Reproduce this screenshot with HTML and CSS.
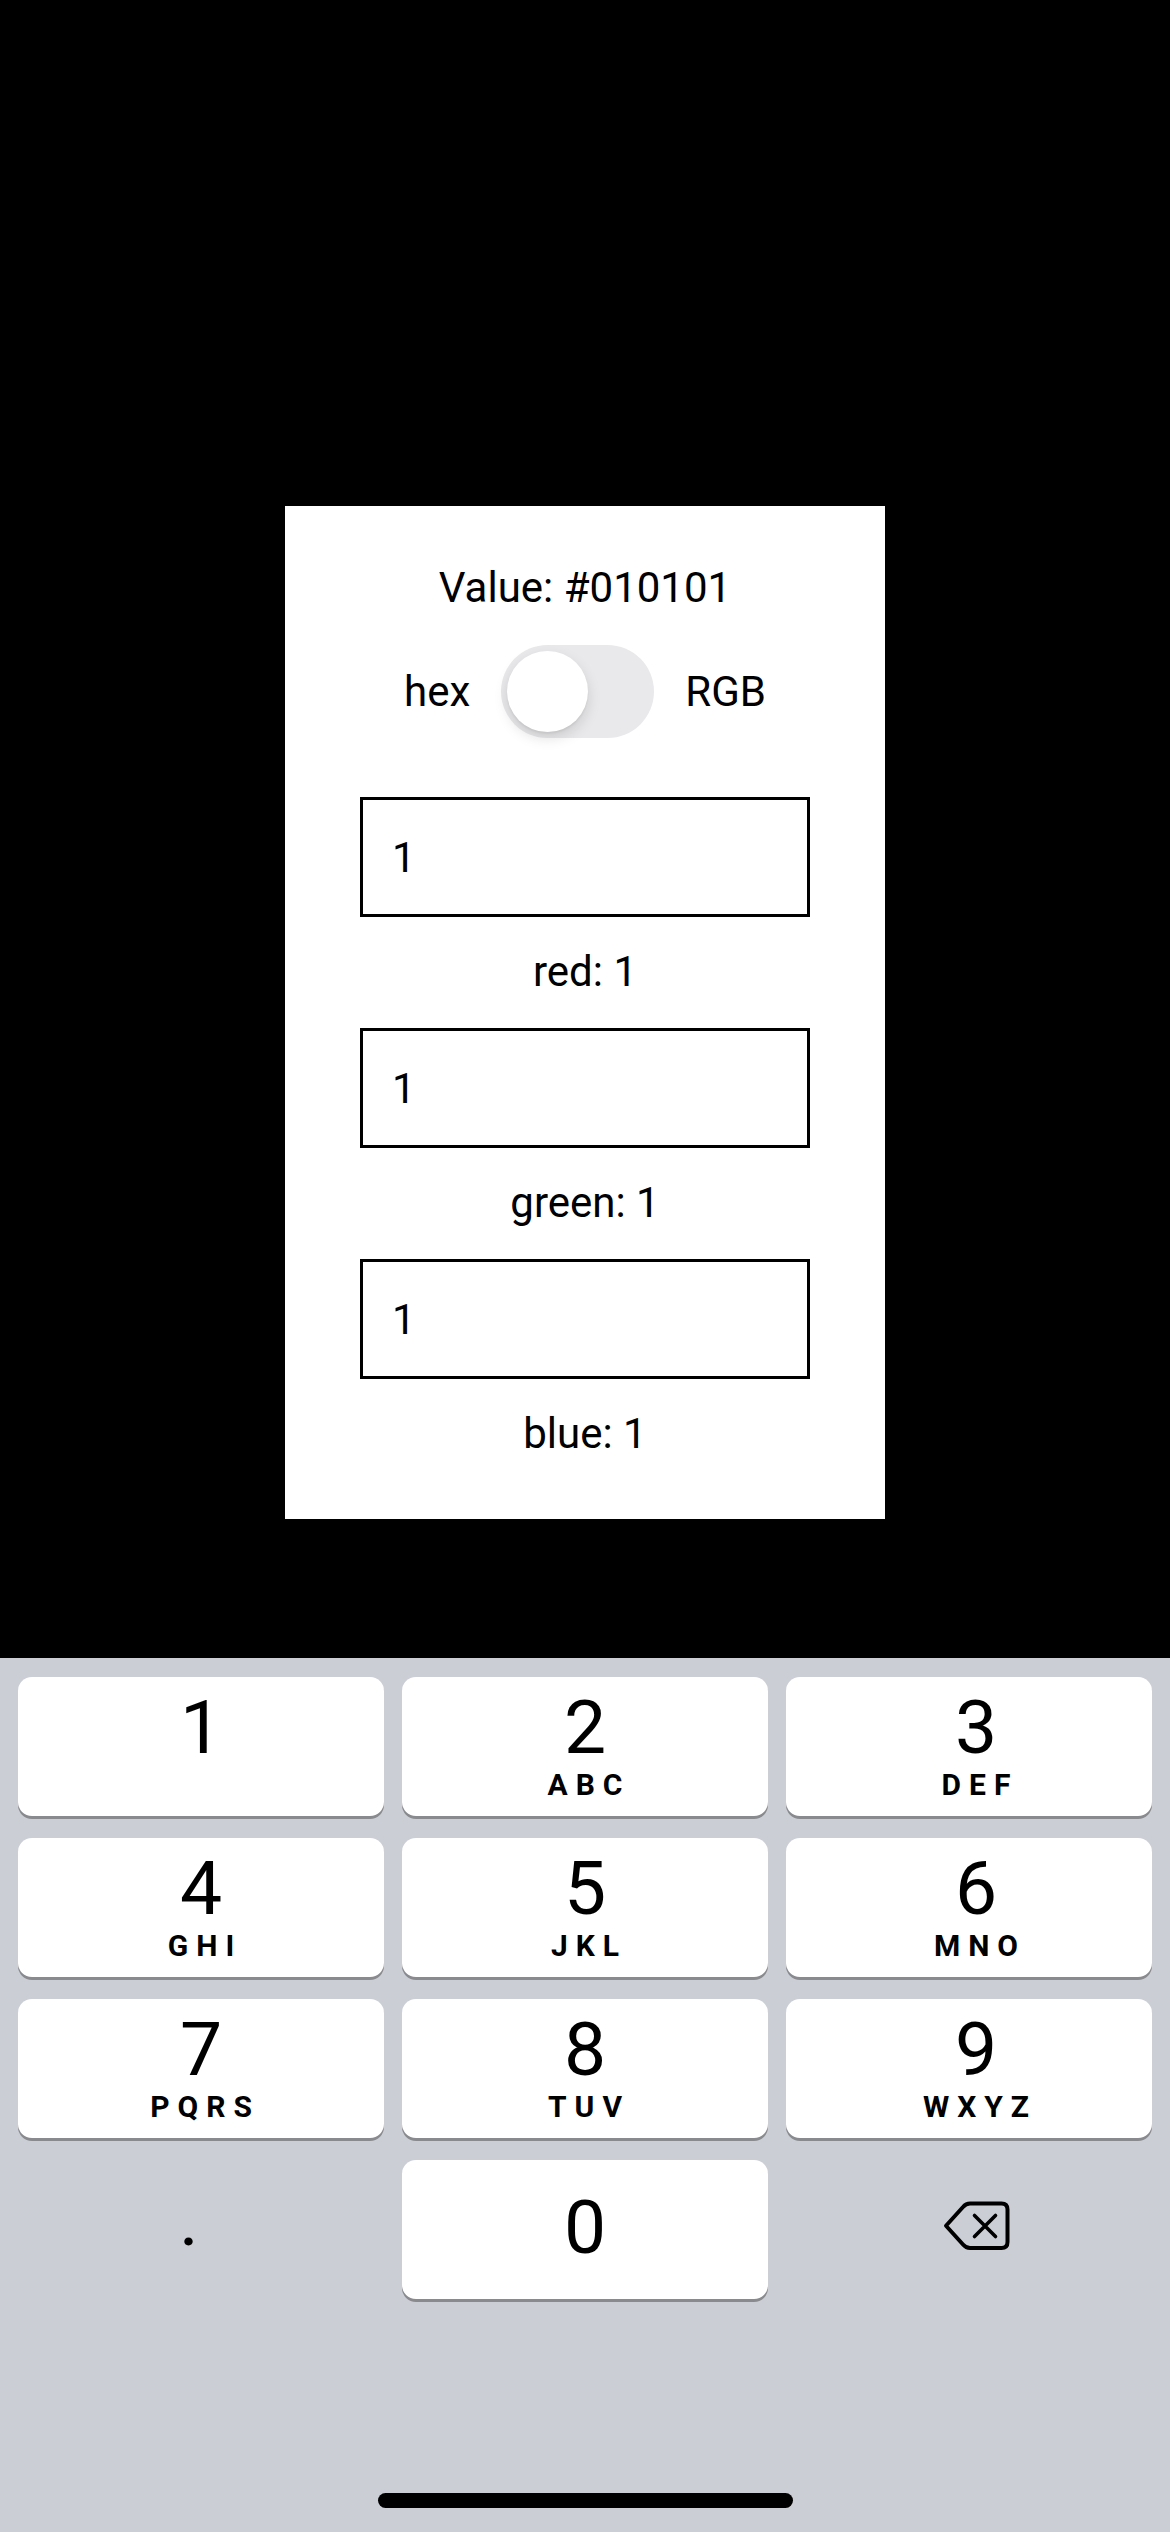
FILE: index.html
```html
<!DOCTYPE html>
<html lang="en">
<head>
<meta charset="utf-8">
<title>Color value</title>
<link rel="stylesheet" href="styles.css">
</head>
<body>
<div class="screen">
  <main class="stage">
    <section class="card">
      <p class="value">Value: #010101</p>
      <div class="switch-row">
        <span class="switch-label">hex</span>
        <span class="switch"><span class="knob"></span></span>
        <span class="switch-label">RGB</span>
      </div>
      <input class="field" type="text" value="1">
      <p class="channel">red: 1</p>
      <input class="field" type="text" value="1">
      <p class="channel">green: 1</p>
      <input class="field" type="text" value="1">
      <p class="channel">blue: 1</p>
    </section>
  </main>
  <section class="keyboard">
    <div class="keys">
      <div class="key"><span class="digit">1</span></div>
      <div class="key"><span class="digit">2</span><span class="letters">ABC</span></div>
      <div class="key"><span class="digit">3</span><span class="letters">DEF</span></div>
      <div class="key"><span class="digit">4</span><span class="letters">GHI</span></div>
      <div class="key"><span class="digit">5</span><span class="letters">JKL</span></div>
      <div class="key"><span class="digit">6</span><span class="letters">MNO</span></div>
      <div class="key"><span class="digit">7</span><span class="letters">PQRS</span></div>
      <div class="key"><span class="digit">8</span><span class="letters">TUV</span></div>
      <div class="key"><span class="digit">9</span><span class="letters">WXYZ</span></div>
      <div class="blank dot-key"><span class="digit">.</span></div>
      <div class="key zero"><span class="digit">0</span></div>
      <div class="blank back-key">
        <svg class="backspace" width="67" height="49" viewBox="0 0 67 49" fill="none" stroke="#000" stroke-width="4" stroke-linejoin="round" stroke-linecap="round">
          <path d="M3 24.75 L20 6 Q23 2.5 27 2.5 L58.5 2.5 Q64.5 2.5 64.5 8.5 L64.5 41 Q64.5 47 58.5 47 L27 47 Q23 47 20 43.5 Z"/>
          <path d="M31.5 14.5 L52.5 35.5 M52.5 14.5 L31.5 35.5" stroke-width="3.6"/>
        </svg>
      </div>
    </div>
    <div class="home-indicator"></div>
  </section>
</div>
</body>
</html>
```

FILE: styles.css
```css
html, body {
  margin: 0;
  padding: 0;
  background: #000;
}

body {
  font-family: Roboto, "Liberation Sans", sans-serif;
  color: #000;
}

.screen {
  width: 1170px;
  height: 2532px;
  display: flex;
  flex-direction: column;
  overflow: hidden;
}

.stage {
  height: 1658px;
  flex: none;
  box-sizing: border-box;
  padding-top: 506px;
  background: #000;
}

.card {
  width: 600px;
  margin: 0 auto;
  box-sizing: border-box;
  padding: 57px 75px 60px;
  background: #fff;
  display: flex;
  flex-direction: column;
  align-items: center;
}

.value,
.channel {
  margin: 0;
  font-size: 42px;
  line-height: 50px;
  text-align: center;
  color: #000;
}

.channel {
  margin-top: 30px;
}

.switch-row {
  margin-top: 32px;
  height: 93px;
  display: flex;
  align-items: center;
  justify-content: center;
  gap: 31px;
}

.switch-label {
  font-size: 42px;
  line-height: 50px;
}

.switch {
  position: relative;
  width: 153px;
  height: 93px;
  border-radius: 47px;
  background: #e9e9eb;
}

.knob {
  position: absolute;
  left: 6px;
  top: 6px;
  width: 81px;
  height: 81px;
  border-radius: 50%;
  background: #fff;
  box-shadow: 0 6px 14px rgba(0, 0, 0, 0.13), 0 2px 2px rgba(0, 0, 0, 0.05);
}

.field {
  margin: 59px 0 0;
  width: 450px;
  height: 120px;
  box-sizing: border-box;
  border: 3px solid #000;
  border-radius: 0;
  padding: 0 29px;
  background: #fff;
  color: #000;
  font-family: Roboto, "Liberation Sans", sans-serif;
  font-size: 42px;
  outline: none;
}

.channel + .field {
  margin-top: 31px;
}

.keyboard {
  flex: 1;
  background: #cbced5;
  display: flex;
  flex-direction: column;
}

.keys {
  display: grid;
  grid-template-columns: repeat(3, 366px);
  grid-auto-rows: 139px;
  column-gap: 18px;
  row-gap: 22px;
  padding: 19px 18px 0;
}

.key {
  background: #fff;
  border-radius: 14px;
  box-shadow: 0 3px 0 #898a8e;
  display: flex;
  flex-direction: column;
  align-items: center;
  box-sizing: border-box;
  padding-top: 10px;
}

.key:nth-child(3n) {
  padding-left: 14px;
}

.digit {
  font-size: 75px;
  line-height: 80px;
  font-weight: 400;
  color: #000;
}

.letters {
  font-size: 30px;
  line-height: 36px;
  font-weight: 700;
  letter-spacing: 8px;
  padding-left: 8px;
  color: #000;
}

.key.zero {
  justify-content: center;
  padding-top: 0;
  padding-bottom: 5px;
}

.blank {
  display: flex;
  align-items: center;
  justify-content: center;
  box-sizing: border-box;
}

.dot-key {
  padding-right: 24px;
  padding-bottom: 21px;
}

.back-key {
  padding-left: 15px;
  padding-bottom: 9px;
}

.backspace {
  display: block;
}

.home-indicator {
  margin: 194px auto 0;
  width: 415px;
  height: 15px;
  border-radius: 8px;
  background: #000;
}
```
